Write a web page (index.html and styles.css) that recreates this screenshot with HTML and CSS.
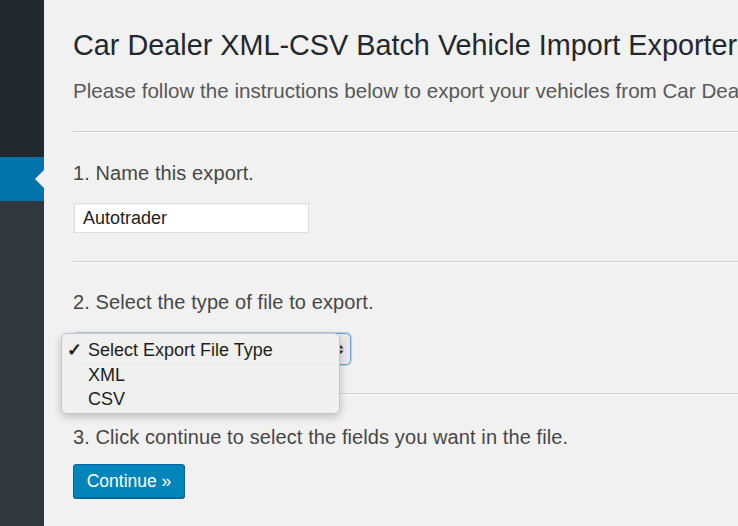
FILE: index.html
```html
<!DOCTYPE html>
<html>
<head>
<meta charset="utf-8">
<link rel="stylesheet" href="styles.css">
</head>
<body>
<div class="layout">
  <aside class="sidebar">
    <div class="menu-top"></div>
    <div class="menu-current"><span class="menu-arrow"></span></div>
    <div class="menu-rest"></div>
  </aside>
  <main class="content">
    <h1 class="title">Car Dealer XML-CSV Batch Vehicle Import Exporter</h1>
    <p class="intro">Please follow the instructions below to export your vehicles from Car Dealer plugin.</p>
    <hr class="sep sep-1">
    <p class="step step-1">1. Name this export.</p>
    <div class="text-input">Autotrader</div>
    <hr class="sep sep-2">
    <p class="step step-2">2. Select the type of file to export.</p>
    <div class="select-wrap">
      <div class="select-box">
        <svg class="select-arrows" width="6" height="11" viewBox="0 0 6 11"><path d="M0.5 4.5 L3 1 L5.5 4.5 Z M0.5 6.5 L3 10 L5.5 6.5 Z" fill="#333"/></svg>
      </div>
      <ul class="dropdown">
        <li class="opt selected"><span class="check">✓</span>Select Export File Type</li>
        <li class="opt">XML</li>
        <li class="opt">CSV</li>
      </ul>
    </div>
    <hr class="sep sep-3">
    <p class="step step-3">3. Click continue to select the fields you want in the file.</p>
    <div class="button">Continue »</div>
  </main>
</div>
</body>
</html>
```
FILE: styles.css
```css
html, body {
  margin: 0;
  padding: 0;
  background: #f1f1f1;
}
body {
  width: 738px;
  height: 526px;
  overflow: hidden;
  font-family: "Liberation Sans", Arial, sans-serif;
}
.layout {
  display: flex;
  height: 526px;
}
.sidebar {
  width: 44px;
  flex: none;
  display: flex;
  flex-direction: column;
  background: #32373c;
}
.menu-top {
  height: 157px;
  background: #23282d;
}
.menu-current {
  height: 44px;
  background: #0073aa;
  position: relative;
}
.menu-arrow {
  position: absolute;
  right: 0;
  top: 13px;
  width: 0;
  height: 0;
  border-top: 9px solid transparent;
  border-bottom: 9px solid transparent;
  border-right: 9px solid #f1f1f1;
}
.menu-rest {
  flex: 1;
}
.content {
  flex: 1;
  min-width: 0;
  padding: 28px 0 0 29px;
  overflow: hidden;
}
.title {
  margin: 0;
  font-size: 28.8px;
  line-height: 35px;
  font-weight: 400;
  color: #23282d;
  white-space: nowrap;
}
.intro {
  margin: 15px 0 0;
  font-size: 20.6px;
  line-height: 26px;
  color: #585858;
  white-space: nowrap;
}
.sep {
  border: 0;
  border-top: 1px solid #cfcfcf;
  border-bottom: 1px solid #fafafa;
  height: 0;
  margin: 0;
}
.sep-1 { margin-top: 27px; }
.sep-2 { margin-top: 28px; }
.sep-3 { margin-top: 28px; }
.step {
  margin: 0;
  font-size: 20px;
  line-height: 26px;
  letter-spacing: 0.1px;
  color: #474747;
  white-space: nowrap;
}
.step-1 { margin-top: 27px; }
.step-2 { margin-top: 26px; }
.step-3 { margin-top: 29px; }
.text-input {
  margin-top: 17px;
  margin-left: 1px;
  width: 225px;
  height: 28px;
  background: #fff;
  border: 1px solid #dedede;
  box-shadow: inset 0 1px 2px rgba(0,0,0,.05);
  font-size: 18px;
  line-height: 28px;
  padding-left: 8px;
  color: #222;
}
.select-wrap {
  position: relative;
  margin-top: 18px;
  width: 278px;
  height: 32px;
}
.select-box {
  box-sizing: border-box;
  width: 278px;
  height: 32px;
  border: 1px solid #6e9fd6;
  border-radius: 5px;
  background: #e9e9e9;
  box-shadow: 0 0 1px 1px rgba(110,160,215,.45);
  display: flex;
  align-items: center;
  justify-content: flex-end;
  padding-right: 6px;
}
.select-arrows {
  display: block;
}
.dropdown {
  position: absolute;
  left: -12px;
  top: 0;
  width: 279px;
  height: 81px;
  box-sizing: border-box;
  margin: 0;
  padding: 4px 0 0;
  list-style: none;
  background: rgba(240,240,240,.98);
  border: 1px solid #c4c4c4;
  border-radius: 6px;
  box-shadow: 0 3px 8px rgba(0,0,0,.22);
}
.opt {
  position: relative;
  padding-left: 26px;
  font-size: 18px;
  line-height: 24.5px;
  color: #1e1e1e;
  white-space: nowrap;
}
.check {
  position: absolute;
  left: 5px;
  top: 0;
  font-size: 18px;
  font-weight: 700;
}
.button {
  margin-top: 14px;
  width: 112px;
  height: 34px;
  box-sizing: border-box;
  background: #0085ba;
  border: 1px solid #006799;
  border-radius: 3px;
  box-shadow: 0 1px 0 #006799;
  color: #fff;
  font-size: 17.5px;
  line-height: 32px;
  text-align: center;
}
```
